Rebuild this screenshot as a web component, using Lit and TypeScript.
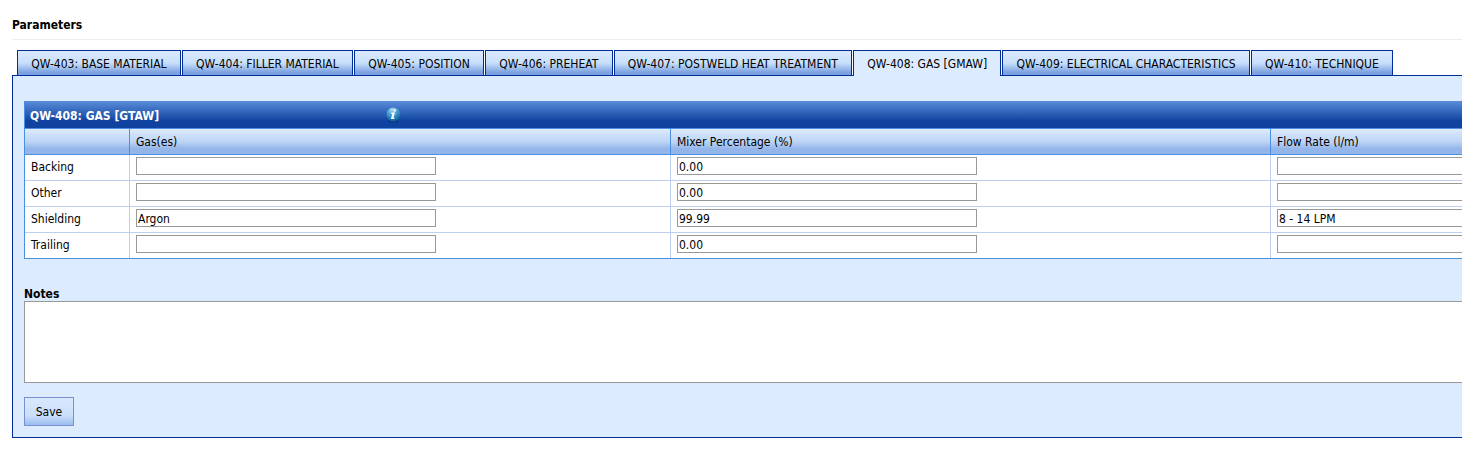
import { LitElement, html, css } from "lit";
import { customElement, state } from "lit/decorators.js";
import { classMap } from "lit/directives/class-map.js";

interface GasRow {
  name: string;
  gas: string;
  mix: string;
  flow: string;
}

const TABS = [
  "QW-403: BASE MATERIAL",
  "QW-404: FILLER MATERIAL",
  "QW-405: POSITION",
  "QW-406: PREHEAT",
  "QW-407: POSTWELD HEAT TREATMENT",
  "QW-408: GAS [GMAW]",
  "QW-409: ELECTRICAL CHARACTERISTICS",
  "QW-410: TECHNIQUE",
];

const ROWS: GasRow[] = [
  { name: "Backing", gas: "", mix: "0.00", flow: "" },
  { name: "Other", gas: "", mix: "0.00", flow: "" },
  { name: "Shielding", gas: "Argon", mix: "99.99", flow: "8 - 14 LPM" },
  { name: "Trailing", gas: "", mix: "0.00", flow: "" },
];

@customElement("app-root")
export class AppRoot extends LitElement {
  static styles = css`
    :host {
      display: block;
      overflow: hidden;
      padding: 16px 0 16px 12px;
      background: #fff;
      color: #000;
      font: 12px/16px "DejaVu Sans Condensed", Tahoma, sans-serif;
    }
    *, *::before, *::after { box-sizing: border-box; }
    button, input, textarea {
      margin: 0;
      border-radius: 0;
      font: inherit;
      color: inherit;
    }
    .title {
      margin: 0 0 10px;
      padding: 1px 0 6px;
      border-bottom: 1px solid #eee;
      font-size: 12px;
      line-height: 16px;
      font-weight: bold;
    }
    .tabs {
      display: flex;
      gap: 1px;
      width: 1376px;
      margin-left: 5px;
    }
    .tab {
      flex: 1 0 auto;
      height: 25px;
      padding: 2px 12px 0;
      border: 1px solid #002d96;
      border-bottom: 0;
      background: linear-gradient(#dbe9fd, #c8dffb 50%, #7ba1e0 90%);
      white-space: nowrap;
    }
    .tab.active {
      height: 26px;
      margin-bottom: -1px;
      padding-top: 1px;
      background: #ddebff;
      z-index: 1;
    }
    .panel {
      padding: 25px 0 11px 11px;
      border: 1px solid #002d96;
      border-right: 0;
      background: #ddebff;
    }
    .grid {
      border: 1px solid #4a8fe3;
      border-right: 0;
      border-top: 0;
      background: #fff;
    }
    .bar {
      display: flex;
      align-items: center;
      height: 27px;
      padding-left: 5px;
      background: linear-gradient(#5b8cda, #0f439f 75%);
      color: #fff;
    }
    .bar-title {
      width: 356px;
      margin: 0;
      padding-top: 2px;
      font-size: 12px;
      font-weight: bold;
    }
    .info { display: block; }
    table {
      width: 100%;
      table-layout: fixed;
      border-collapse: separate;
      border-spacing: 0;
      border-top: 1px solid #4a8fe3;
    }
    .c-name { width: 105px; }
    .c-gas { width: 541px; }
    .c-mix { width: 600px; }
    th {
      height: 26px;
      padding: 0 6px;
      border-right: 1px solid #4a8fe3;
      border-bottom: 1px solid #4a8fe3;
      text-align: left;
      font-weight: normal;
      background: linear-gradient(#dceafd, #bdd5f5 50%, #94b5e9 80%);
    }
    td {
      height: 26px;
      padding: 2px 6px 5px;
      border-right: 1px solid #bbd0ee;
      border-bottom: 1px solid #bbd0ee;
      vertical-align: top;
      background: #fff;
    }
    .row-name { padding: 4px 6px 5px; }
    tbody tr:last-child > * { border-bottom: 0; height: 25px; }
    th:last-child, td:last-child { border-right: 0; }
    .field {
      display: block;
      width: 300px;
      height: 18px;
      padding: 1px 1px 0;
      border: 1px solid #999;
      background: #fff;
    }
    .notes-label {
      display: block;
      margin-top: 28px;
      padding-top: 1px;
      line-height: 13px;
      font-weight: bold;
    }
    .notes {
      display: block;
      width: 100%;
      height: 82px;
      padding: 2px;
      border: 1px solid #999;
      border-right: 0;
      background: #fff;
      resize: none;
    }
    .save {
      display: block;
      width: 50px;
      height: 29px;
      margin-top: 14px;
      padding: 0;
      border: 1px solid #7791d0;
      background: linear-gradient(#d9e8fd, #cbdffb 65%, #9bbdef);
    }
  `;

  @state() private active = 5;

  private field(row: GasRow, key: "gas" | "mix" | "flow", label: string) {
    return html`<td>
      <input class="field" type="text" aria-label="${row.name} ${label}" .value=${row[key]} />
    </td>`;
  }

  render() {
    return html`
      <h1 class="title">Parameters</h1>
      <div class="tabs" role="tablist">
        ${TABS.map(
          (t, i) => html`<button
            type="button"
            role="tab"
            aria-selected=${i === this.active ? "true" : "false"}
            class=${classMap({ tab: true, active: i === this.active })}
            @click=${() => (this.active = i)}
          >${t}</button>`
        )}
      </div>
      <section class="panel" role="tabpanel">
        <div class="grid">
          <div class="bar">
            <h2 class="bar-title">QW-408: GAS [GTAW]</h2>
            <svg class="info" width="15" height="16" viewBox="0 0 15 16" aria-hidden="true">
              <defs>
                <radialGradient id="ball" cx="40%" cy="15%" r="85%">
                  <stop offset="0" stop-color="#b4dcf0" />
                  <stop offset="0.4" stop-color="#4fa6d6" />
                  <stop offset="1" stop-color="#0a5c9c" />
                </radialGradient>
              </defs>
              <ellipse cx="7.5" cy="14" rx="5" ry="1.6" fill="#0a2f6e" opacity="0.6" />
              <circle cx="7.5" cy="7.5" r="7" fill="url(#ball)" />
              <circle cx="8.8" cy="3.4" r="1.2" fill="#fff" />
              <path d="M5.4 5.6H9L7.4 10.8H8.6L8.2 12H4.9L6.4 6.8H5.1Z" fill="#fff" />
            </svg>
          </div>
          <table aria-label="QW-408 gas">
            <colgroup>
              <col class="c-name" /><col class="c-gas" /><col class="c-mix" /><col />
            </colgroup>
            <thead>
              <tr>
                <th></th>
                <th scope="col">Gas(es)</th>
                <th scope="col">Mixer Percentage (%)</th>
                <th scope="col">Flow Rate (l/m)</th>
              </tr>
            </thead>
            <tbody>
              ${ROWS.map(
                (r) => html`<tr>
                  <td class="row-name">${r.name}</td>
                  ${this.field(r, "gas", "Gas(es)")}
                  ${this.field(r, "mix", "Mixer Percentage (%)")}
                  ${this.field(r, "flow", "Flow Rate (l/m)")}
                </tr>`
              )}
            </tbody>
          </table>
        </div>
        <label class="notes-label" for="notes">Notes</label>
        <textarea class="notes" id="notes"></textarea>
        <button class="save" type="button">Save</button>
      </section>
    `;
  }
}
